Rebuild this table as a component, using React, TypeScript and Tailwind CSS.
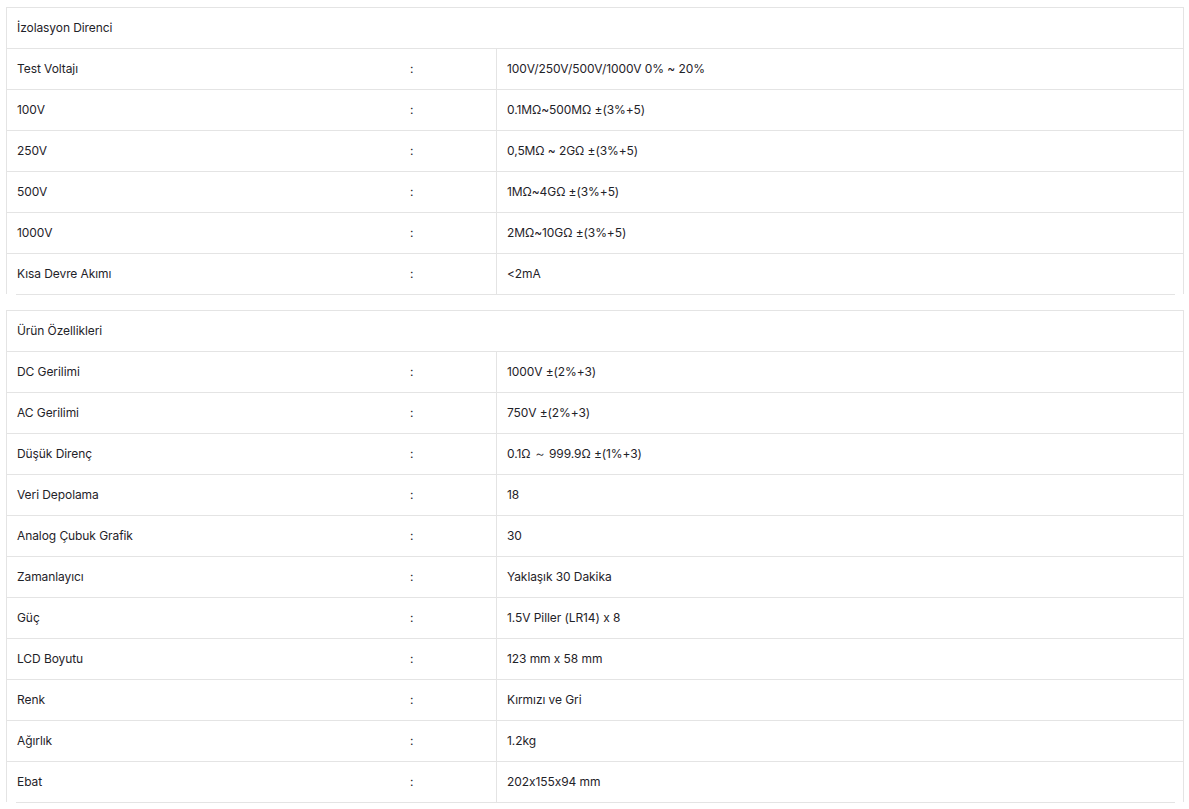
type Row = [string, string];

const izolasyon: Row[] = [
  ['Test Voltajı', '100V/250V/500V/1000V 0% ~ 20%'],
  ['100V', '0.1MΩ~500MΩ ±(3%+5)'],
  ['250V', '0,5MΩ ~ 2GΩ ±(3%+5)'],
  ['500V', '1MΩ~4GΩ ±(3%+5)'],
  ['1000V', '2MΩ~10GΩ ±(3%+5)'],
  ['Kısa Devre Akımı', '<2mA'],
];

const ozellikler: Row[] = [
  ['DC Gerilimi', '1000V ±(2%+3)'],
  ['AC Gerilimi', '750V ±(2%+3)'],
  ['Düşük Direnç', '0.1Ω ～ 999.9Ω ±(1%+3)'],
  ['Veri Depolama', '18'],
  ['Analog Çubuk Grafik', '30'],
  ['Zamanlayıcı', 'Yaklaşık 30 Dakika'],
  ['Güç', '1.5V Piller (LR14) x 8'],
  ['LCD Boyutu', '123 mm x 58 mm'],
  ['Renk', 'Kırmızı ve Gri'],
  ['Ağırlık', '1.2kg'],
  ['Ebat', '202x155x94 mm'],
];

function SpecTable({ title, rows }: { title: string; rows: Row[] }) {
  return (
    <div>
      <div className="border-x border-t border-[#e4e4e4]">
        <div className="flex h-[41px] items-center border-b border-[#e4e4e4] px-[10px]">
          {title}
        </div>
        {rows.map(([label, value], i) => (
          <div
            key={label}
            className={
              i === rows.length - 1
                ? 'flex h-[40px] items-stretch'
                : 'flex h-[41px] items-stretch border-b border-[#e4e4e4]'
            }
          >
            <div className="flex w-[393px] items-center px-[10px]">{label}</div>
            <div className="flex w-[96px] items-center px-[10px]">:</div>
            <div className="flex flex-1 items-center border-l border-[#e4e4e4] px-[10px]">{value}</div>
          </div>
        ))}
      </div>
      <div className="ml-[10px] mr-[9px] h-px bg-[#e4e4e4]" />
    </div>
  );
}

export default function App() {
  return (
    <div
      className="min-h-[809px] bg-white pt-[7px] text-[12px] tracking-[-0.08px] text-[#1f2329] [font-feature-settings:'calt'_0]"
      style={{ fontFamily: 'Inter, "Noto Sans", sans-serif' }}
    >
      <div className="ml-[6px] flex w-[1178px] flex-col gap-[15px]">
        <SpecTable title="İzolasyon Direnci" rows={izolasyon} />
        <SpecTable title="Ürün Özellikleri" rows={ozellikler} />
      </div>
    </div>
  );
}
